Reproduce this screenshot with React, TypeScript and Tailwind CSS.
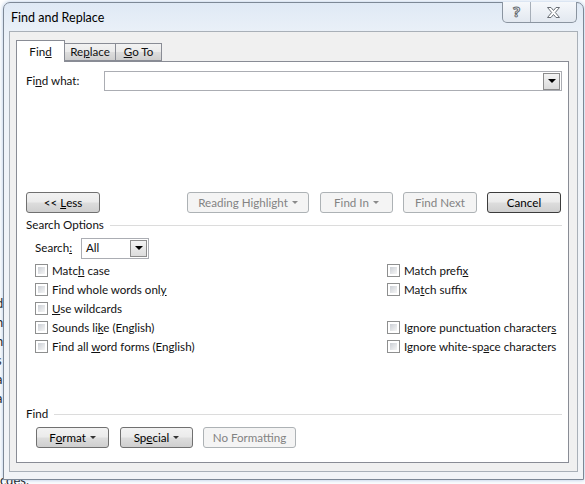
import React from "react";

const FONT = "font-['Lato','Noto_Sans',sans-serif]";

function Btn({
  children,
  disabled,
  isDefault,
  className = "",
}: {
  children: React.ReactNode;
  disabled?: boolean;
  isDefault?: boolean;
  className?: string;
}) {
  if (disabled) {
    return (
      <div
        className={`flex h-[21px] shrink-0 items-center justify-center rounded-[3px] border border-[#adb2b5] bg-[#f4f4f4] text-[#838383] ${className}`}
      >
        {children}
      </div>
    );
  }
  return (
    <div
      className={`flex h-[21px] shrink-0 items-center justify-center rounded-[3px] border ${
        isDefault ? "border-[#3c3c3c]" : "border-[#707070]"
      } bg-[linear-gradient(#f2f2f2,#ebebeb_48%,#dddddd_52%,#cfcfcf)] text-black ${className}`}
    >
      {children}
    </div>
  );
}

function Caret({ light }: { light?: boolean }) {
  return (
    <span
      className={`ml-[4px] inline-block h-0 w-0 border-x-[3px] border-t-[3px] border-x-transparent ${
        light ? "border-t-[#8a8a8a]" : "border-t-[#333]"
      }`}
    />
  );
}

function Check({ children }: { children: React.ReactNode }) {
  return (
    <div className="flex h-[19px] items-center whitespace-nowrap">
      <div className="mr-[4px] h-[13px] w-[13px] shrink-0 border border-[#8e8f8f] bg-white p-[2px]">
        <div className="h-full w-full bg-[linear-gradient(135deg,#cbcfd5,#f6f6f6)]" />
      </div>
      <span>{children}</span>
    </div>
  );
}

function DropBtn() {
  return (
    <div className="flex h-[17px] w-[17px] shrink-0 items-center justify-center border border-[#8c8c8c] bg-[linear-gradient(#f3f3f3,#dcdcdc)]">
      <span className="inline-block h-0 w-0 border-x-[4px] border-t-[4px] border-x-transparent border-t-black" />
    </div>
  );
}

export default function App() {
  return (
    <div
      className={`relative h-[484px] w-[585px] overflow-hidden bg-white text-[11.6px] leading-none text-[#111] ${FONT}`}
    >
      {/* document behind the dialog */}
      <div className="absolute left-[-4px] top-[296px] flex flex-col gap-[5px] text-[13px] leading-[14px] text-[#222]">
        <span>d</span>
        <span>n</span>
        <span>h</span>
        <span>s</span>
        <span>a</span>
        <span>a</span>
      </div>
      <div className="absolute left-0 top-[474px] text-[13px] text-[#222]">cdes.</div>

      {/* WINDOW */}
      <div className="relative ml-[3px] mt-[2px] h-[478px] w-[581px] rounded-t-[7px] border border-[#7d8896] bg-[linear-gradient(#dfe9f5,#eef3f9_40px,#f2f4f7)] shadow-[0_0_4px_rgba(90,140,200,0.5)]">
        {/* TITLE BAR */}
        <div className="flex h-[28px] items-center pl-[7px] pt-[3px] text-[12.5px] text-black">
          Find and Replace
        </div>
        <div className="absolute right-[6px] top-[-1px] flex h-[21px] overflow-hidden rounded-b-[5px] border border-t-0 border-[#8a94a0] bg-[linear-gradient(#f6f8fb,#e2e8f0)]">
          <div className="flex w-[28px] items-center justify-center border-r border-[#a6aeb8] font-['Noto_Sans',sans-serif] text-[14px] font-bold text-white [-webkit-text-stroke:1px_#666b72]">
            ?
          </div>
          <div className="flex w-[45px] items-center justify-center">
            <svg width="15" height="13" viewBox="0 0 15 13">
              <path
                d="M1.5 1.5h3.5l2.5 3 2.5-3h3.5l-4.2 5 4.2 5h-3.5l-2.5-3-2.5 3h-3.5l4.2-5z"
                fill="#fff"
                stroke="#6a6f76"
                strokeWidth="1"
                strokeLinejoin="round"
              />
            </svg>
          </div>
        </div>

        {/* CLIENT AREA */}
        <div className="mx-[5px] h-[441px] border border-[#a9b0b8] bg-[#f0f0f0] px-[6px] pt-[7px]">
          {/* TABS */}
          <div className="flex h-[22px] items-end">
            <div className="relative z-10 mb-[-1px] flex h-[22px] w-[49px] items-center justify-center border border-b-0 border-[#898c95] bg-white">
              Fin<span className="underline">d</span>
            </div>
            <div className="flex h-[18px] w-[51px] items-center justify-center border border-l-0 border-[#898c95] bg-[linear-gradient(#f2f2f2,#ebebeb_48%,#dddddd_52%,#cfcfcf)]">
              Re<span className="underline">p</span>lace
            </div>
            <div className="flex h-[18px] w-[46px] items-center justify-center border border-l-0 border-[#898c95] bg-[linear-gradient(#f2f2f2,#ebebeb_48%,#dddddd_52%,#cfcfcf)]">
              <span className="underline">G</span>o To
            </div>
          </div>

          {/* TAB PAGE */}
          <div className="h-[402px] w-[553px] border border-[#898c95] bg-white pl-[9px] pr-[6px] pt-[9px]">
            {/* find what */}
            <div className="flex h-[20px] items-center">
              <span className="w-[78px] shrink-0">
                Fi<span className="underline">n</span>d what:
              </span>
              <div className="flex h-[20px] flex-1 items-center justify-end border border-[#abadb3] pr-[1px]">
                <DropBtn />
              </div>
            </div>

            {/* buttons row */}
            <div className="mt-[101px] flex items-center">
              <Btn className="w-[74px]">
                &lt;&lt; <span className="ml-[3px] underline">L</span>ess
              </Btn>
              <Btn disabled className="ml-[87px] w-[122px]">
                Reading Highlight
                <Caret light />
              </Btn>
              <Btn disabled className="ml-[11px] w-[73px]">
                Find In
                <Caret light />
              </Btn>
              <Btn disabled className="ml-[10px] w-[74px]">
                Find Next
              </Btn>
              <Btn isDefault className="ml-[10px] w-[74px]">
                Cancel
              </Btn>
            </div>

            {/* search options */}
            <div className="mt-[6px] flex h-[12px] items-center">
              <span>Search Options</span>
              <div className="ml-[6px] h-px flex-1 bg-[#dcdcdc]" />
            </div>

            <div className="mt-[7px] flex h-[20px] items-center pl-[9px]">
              <span className="w-[46px]">
                Search<span className="underline">:</span>
              </span>
              <div className="flex h-[21px] w-[68px] items-center justify-between border border-[#abadb3] pl-[4px] pr-[1px]">
                <span>All</span>
                <DropBtn />
              </div>
            </div>

            <div className="mt-[3px] flex pl-[9px]">
              <div className="flex w-[352px] shrink-0 flex-col">
                <Check>
                  Matc<span className="underline">h</span> case
                </Check>
                <Check>
                  Find whole words onl<span className="underline">y</span>
                </Check>
                <Check>
                  <span className="underline">U</span>se wildcards
                </Check>
                <Check>
                  Sounds li<span className="underline">k</span>e (English)
                </Check>
                <Check>
                  Find all <span className="underline">w</span>ord forms (English)
                </Check>
              </div>
              <div className="flex flex-col">
                <Check>
                  Match prefi<span className="underline">x</span>
                </Check>
                <Check>
                  Ma<span className="underline">t</span>ch suffix
                </Check>
                <div className="h-[19px]" />
                <Check>
                  Ignore punctuation character<span className="underline">s</span>
                </Check>
                <Check>
                  Ignore white-sp<span className="underline">a</span>ce characters
                </Check>
              </div>
            </div>

            {/* find section */}
            <div className="mt-[52px] flex h-[12px] items-center">
              <span>Find</span>
              <div className="ml-[6px] h-px flex-1 bg-[#dcdcdc]" />
            </div>

            <div className="mt-[7px] flex items-center pl-[10px]">
              <Btn className="w-[73px]">
                F<span className="underline">o</span>rmat
                <Caret />
              </Btn>
              <Btn className="ml-[11px] w-[73px]">
                Sp<span className="underline">e</span>cial
                <Caret />
              </Btn>
              <Btn disabled className="ml-[10px] w-[93px]">
                No Formatting
              </Btn>
            </div>
          </div>
        </div>
      </div>
    </div>
  );
}
